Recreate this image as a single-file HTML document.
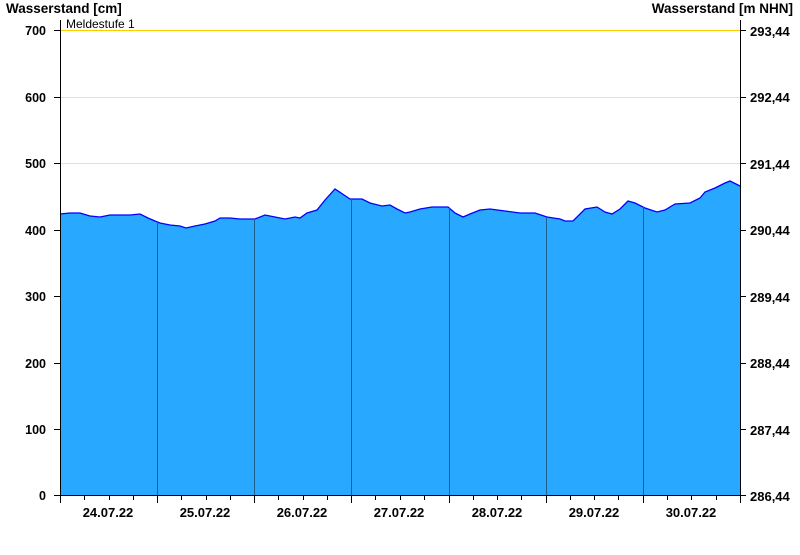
<!DOCTYPE html>
<html><head><meta charset="utf-8"><style>
body{margin:0;background:#fff;}
text{font-family:"Liberation Sans",Arial,sans-serif;}
</style></head><body>
<svg width="800" height="550" xmlns="http://www.w3.org/2000/svg">
<g stroke="#e0e0e0" stroke-width="1">
<line x1="60" y1="97.5" x2="740" y2="97.5"/><line x1="60" y1="163.5" x2="740" y2="163.5"/><line x1="60" y1="230.5" x2="740" y2="230.5"/><line x1="60" y1="296.5" x2="740" y2="296.5"/><line x1="60" y1="363.5" x2="740" y2="363.5"/><line x1="60" y1="429.5" x2="740" y2="429.5"/>
</g>
<polygon fill="#29a8ff" stroke="none" points="60,495 60,214 70,213 80,213 90,216 100,217 110,215 130,215 140,214 148,218 155,221 160,223 170,225 180,226 186,228 195,226 205,224 215,221 220,218 230,218 240,219 255,219 265,215 275,217 285,219 295,217 300,218 307,213 317,210 325,200 335,189 350,199 362,199 370,203 382,206 390,205 397,209 405,213 410,212 420,209 432,207 448,207 455,213 463,217 470,214 480,210 490,209 505,211 520,213 535,213 547,217 560,219 565,221 573,221 585,209 597,207 605,212 612,214 620,209 628,201 635,203 645,208 657,212 665,210 675,204 690,203 700,198 705,192 715,188 725,183 730,181 740,186 740,495"/>
<polyline fill="none" stroke="#0000ff" stroke-width="1.3" points="60,214 70,213 80,213 90,216 100,217 110,215 130,215 140,214 148,218 155,221 160,223 170,225 180,226 186,228 195,226 205,224 215,221 220,218 230,218 240,219 255,219 265,215 275,217 285,219 295,217 300,218 307,213 317,210 325,200 335,189 350,199 362,199 370,203 382,206 390,205 397,209 405,213 410,212 420,209 432,207 448,207 455,213 463,217 470,214 480,210 490,209 505,211 520,213 535,213 547,217 560,219 565,221 573,221 585,209 597,207 605,212 612,214 620,209 628,201 635,203 645,208 657,212 665,210 675,204 690,203 700,198 705,192 715,188 725,183 730,181 740,186"/>
<g stroke="#1e5f8c" stroke-width="1">
<line x1="157.5" y1="222" x2="157.5" y2="495"/><line x1="254.5" y1="219" x2="254.5" y2="495"/><line x1="351.5" y1="199" x2="351.5" y2="495"/><line x1="449.5" y1="208" x2="449.5" y2="495"/><line x1="546.5" y1="217" x2="546.5" y2="495"/><line x1="643.5" y1="207" x2="643.5" y2="495"/>
</g>
<line x1="60" y1="30.5" x2="740" y2="30.5" stroke="#ffcc00" stroke-width="1"/>
<text x="66" y="28" font-size="12" fill="#000">Meldestufe 1</text>
<g stroke="#000" stroke-width="1">
<line x1="60.5" y1="20" x2="60.5" y2="495"/><line x1="740.5" y1="20" x2="740.5" y2="495"/>
<line x1="54" y1="495.5" x2="746" y2="495.5"/>
<line x1="54" y1="30.5" x2="60" y2="30.5"/><line x1="54" y1="97.5" x2="60" y2="97.5"/><line x1="54" y1="163.5" x2="60" y2="163.5"/><line x1="54" y1="230.5" x2="60" y2="230.5"/><line x1="54" y1="296.5" x2="60" y2="296.5"/><line x1="54" y1="363.5" x2="60" y2="363.5"/><line x1="54" y1="429.5" x2="60" y2="429.5"/>
<line x1="740" y1="30.5" x2="746" y2="30.5"/><line x1="740" y1="97.5" x2="746" y2="97.5"/><line x1="740" y1="163.5" x2="746" y2="163.5"/><line x1="740" y1="230.5" x2="746" y2="230.5"/><line x1="740" y1="296.5" x2="746" y2="296.5"/><line x1="740" y1="363.5" x2="746" y2="363.5"/><line x1="740" y1="429.5" x2="746" y2="429.5"/>
<line x1="60.5" y1="495" x2="60.5" y2="503"/><line x1="157.5" y1="495" x2="157.5" y2="503"/><line x1="254.5" y1="495" x2="254.5" y2="503"/><line x1="351.5" y1="495" x2="351.5" y2="503"/><line x1="449.5" y1="495" x2="449.5" y2="503"/><line x1="546.5" y1="495" x2="546.5" y2="503"/><line x1="643.5" y1="495" x2="643.5" y2="503"/><line x1="740.5" y1="495" x2="740.5" y2="503"/>
</g>
<g stroke="#000" stroke-width="1">
<line x1="84.5" y1="495" x2="84.5" y2="500"/><line x1="109.5" y1="495" x2="109.5" y2="500"/><line x1="133.5" y1="495" x2="133.5" y2="500"/>
<line x1="181.5" y1="495" x2="181.5" y2="500"/><line x1="206.5" y1="495" x2="206.5" y2="500"/><line x1="230.5" y1="495" x2="230.5" y2="500"/>
<line x1="278.5" y1="495" x2="278.5" y2="500"/><line x1="303.5" y1="495" x2="303.5" y2="500"/><line x1="327.5" y1="495" x2="327.5" y2="500"/>
<line x1="375.5" y1="495" x2="375.5" y2="500"/><line x1="400.5" y1="495" x2="400.5" y2="500"/><line x1="424.5" y1="495" x2="424.5" y2="500"/>
<line x1="473.5" y1="495" x2="473.5" y2="500"/><line x1="497.5" y1="495" x2="497.5" y2="500"/><line x1="521.5" y1="495" x2="521.5" y2="500"/>
<line x1="570.5" y1="495" x2="570.5" y2="500"/><line x1="594.5" y1="495" x2="594.5" y2="500"/><line x1="618.5" y1="495" x2="618.5" y2="500"/>
<line x1="667.5" y1="495" x2="667.5" y2="500"/><line x1="691.5" y1="495" x2="691.5" y2="500"/><line x1="716.5" y1="495" x2="716.5" y2="500"/>
</g>
<g font-weight="bold" fill="#000">
<text x="6" y="13" font-size="13.5">Wasserstand [cm]</text>
<text x="793" y="13" text-anchor="end" font-size="13.5">Wasserstand [m NHN]</text>
<g text-anchor="end" font-size="12.5">
<text x="46" y="35">700</text><text x="46" y="102">600</text><text x="46" y="168">500</text><text x="46" y="235">400</text><text x="46" y="301">300</text><text x="46" y="368">200</text><text x="46" y="434">100</text><text x="46" y="500">0</text>
</g>
<g font-size="13">
<text x="750" y="36">293,44</text><text x="750" y="102">292,44</text><text x="750" y="169">291,44</text><text x="750" y="235">290,44</text><text x="750" y="302">289,44</text><text x="750" y="368">288,44</text><text x="750" y="435">287,44</text><text x="750" y="501">286,44</text>
</g>
<g text-anchor="middle" font-size="13">
<text x="108" y="517">24.07.22</text><text x="205" y="517">25.07.22</text><text x="302" y="517">26.07.22</text><text x="399" y="517">27.07.22</text><text x="497" y="517">28.07.22</text><text x="594" y="517">29.07.22</text><text x="691" y="517">30.07.22</text>
</g>
</g>
</svg>
</body></html>
